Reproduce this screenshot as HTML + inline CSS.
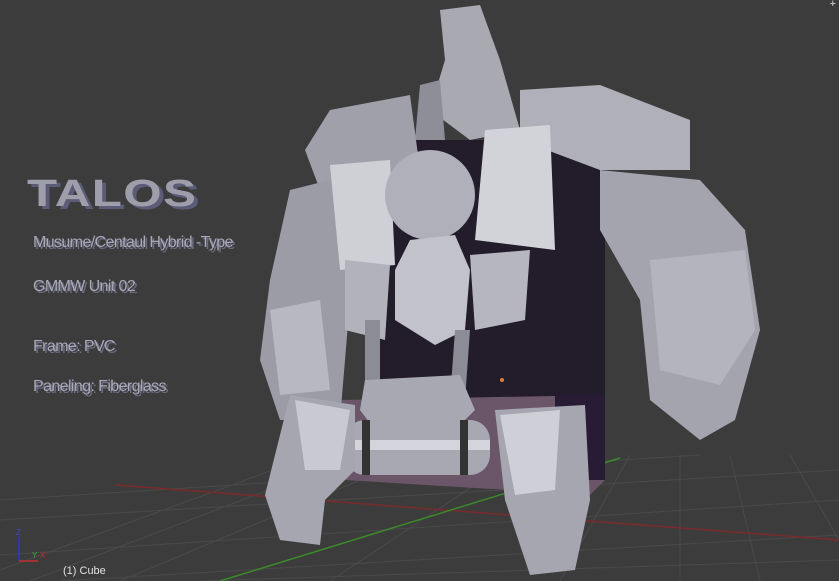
<!DOCTYPE html>
<html><head><meta charset="utf-8"><style>
body{margin:0;width:839px;height:581px;overflow:hidden;background:#3c3c3c;font-family:"Liberation Sans",sans-serif}
.t{position:absolute;color:#a9a9b8;font-size:16px;text-shadow:2px 2px 0 #6c6c84;letter-spacing:-0.6px}
</style></head><body>
<svg width="839" height="581" style="position:absolute;left:0;top:0">
<g stroke="#4a4a4a" stroke-width="1" fill="none">
<path d="M0,520 L839,470 M0,555 L839,500 M60,581 L839,535 M0,500 L700,455 M200,581 L839,560"/>
<path d="M120,581 L420,455 M330,581 L520,455 M560,581 L630,455 M760,581 L730,455 M839,540 L790,455 M0,570 L300,460 M30,581 L360,455 M680,581 L680,455"/>
</g>
<path d="M115,485 L839,540" stroke="#7a2a2a" stroke-width="1.5"/>
<path d="M220,581 L620,458" stroke="#3a8a2a" stroke-width="1.5"/>
<rect x="375" y="140" width="230" height="320" fill="#231c2a"/>
<polygon points="340,400 605,395 605,480 590,495 345,480" fill="#6a5668"/>
<rect x="555" y="395" width="50" height="85" fill="#271c33"/>
<polygon points="440,10 480,5 500,60 520,130 470,140 430,110 445,60" fill="#a9a9b2"/>
<polygon points="420,85 440,80 445,140 415,140" fill="#8e8e98"/>
<polygon points="330,110 410,95 420,170 320,190 305,150" fill="#a0a0aa"/>
<polygon points="520,90 600,85 690,120 690,170 600,170 520,140" fill="#b0b0ba"/>
<polygon points="290,190 330,180 360,260 350,300 340,420 280,420 260,360 270,280" fill="#9c9ca6"/>
<polygon points="270,310 320,300 330,390 280,395" fill="#b8b8c2"/>
<polygon points="600,170 700,180 745,230 760,330 735,420 700,440 650,400 640,300 600,230" fill="#a4a4ae"/>
<polygon points="650,260 745,250 755,330 720,385 660,370" fill="#b4b4be"/>
<polygon points="330,165 390,160 395,265 340,270" fill="#cfcfd6"/>
<polygon points="485,130 550,125 555,250 475,240" fill="#d2d2d9"/>
<circle cx="430" cy="195" r="45" fill="#b0b0ba"/>
<polygon points="410,240 455,235 470,270 465,330 435,345 395,320 395,270" fill="#c2c2cb"/>
<polygon points="345,260 390,265 385,340 345,330" fill="#b2b2bc"/>
<polygon points="470,255 530,250 525,320 475,330" fill="#b6b6c0"/>
<polygon points="365,320 380,320 380,400 365,400" fill="#8c8c96"/>
<polygon points="455,330 470,330 465,400 450,400" fill="#8c8c96"/>
<polygon points="365,380 460,375 475,410 455,430 375,430 360,410" fill="#a8a8b2"/>
<rect x="345" y="420" width="145" height="55" rx="20" fill="#a8a8b2"/>
<rect x="345" y="440" width="145" height="10" fill="#d4d4dc"/>
<rect x="362" y="420" width="8" height="55" fill="#333"/>
<rect x="460" y="420" width="8" height="55" fill="#333"/>
<polygon points="290,395 355,405 355,470 325,500 320,545 280,540 265,495" fill="#a6a6b0"/>
<polygon points="295,400 350,410 340,470 305,470" fill="#c9c9d1"/>
<polygon points="495,410 585,405 590,500 575,570 530,575 505,500" fill="#a6a6b0"/>
<polygon points="500,415 560,410 555,490 515,495" fill="#cfcfd7"/>
<circle cx="502" cy="380" r="2" fill="#e08030"/>
<path d="M19,537 V561" stroke="#2a3ad0" stroke-width="1.5" fill="none"/>
<path d="M19,561 H38" stroke="#c03030" stroke-width="1.5"/>
<text x="16" y="535" fill="#3a4ad8" font-size="8">Z</text>
<text x="32" y="558" fill="#3ab03a" font-size="8">Y</text>
<text x="40" y="558" fill="#c03030" font-size="8">X</text>
</svg>
<div style="position:absolute;left:27px;top:172px;font-size:38px;font-weight:bold;color:#9e9eaa;text-shadow:3px 3px 0 #5c5c78;letter-spacing:1px;transform:scaleX(1.3);transform-origin:left;line-height:44px">TALOS</div>
<div class="t" style="left:33px;top:234px">Musume/Centaul Hybrid -Type</div>
<div class="t" style="left:33px;top:278px">GMMW Unit 02</div>
<div class="t" style="left:33px;top:338px">Frame: PVC</div>
<div class="t" style="left:33px;top:378px">Paneling: Fiberglass</div>
<div style="position:absolute;left:63px;top:565px;font-size:11px;color:#e0e0e0">(1) Cube</div>
<div style="position:absolute;right:3px;top:-2px;font-size:11px;color:#ddd">+</div>
</body></html>
